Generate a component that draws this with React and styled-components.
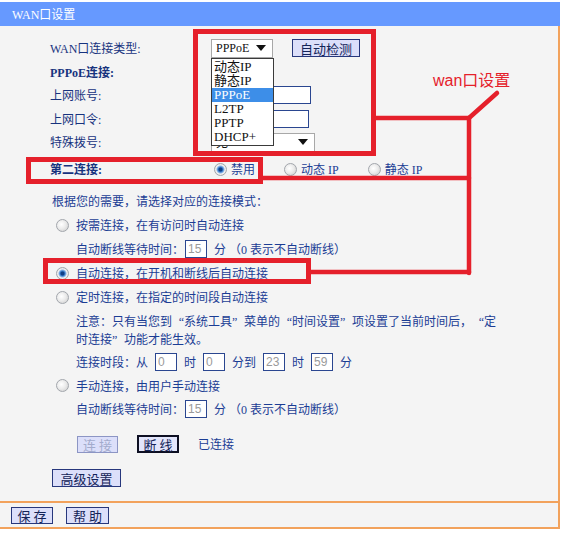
import React from "react";
import styled, { createGlobalStyle, css } from "styled-components";

const navy = "#1b3d94";
const orange = "#f2a25c";
const red = "#e5202b";

const GlobalStyle = createGlobalStyle`
  html, body { margin: 0; padding: 0; background: #fff; }
  body {
    font-family: "Liberation Serif", "Noto Sans CJK SC", serif;
    font-size: 12px;
    color: ${navy};
  }
`;

const Page = styled.div`
  position: relative;
  width: 560px;
  padding-top: 2px;
`;

const TitleBar = styled.div`
  height: 24px;
  background: #6699ff;
  color: #fff;
  padding-left: 12px;
  display: flex;
  align-items: center;
  font-size: 12px;
`;

const Panel = styled.div`
  box-sizing: border-box;
  height: 475px;
  padding: 10px 0 0 50px;
  background: #f4f4f4;
  border-right: 2px solid ${orange};
`;

const Footer = styled.div`
  display: flex;
  align-items: center;
  gap: 13px;
  height: 24px;
  padding-left: 11px;
  background: #f4f4f4;
  border: 2px solid ${orange};
  border-left: none;
`;

const Row = styled.div`
  display: flex;
  align-items: center;
  height: ${p => p.$h || 24}px;
  margin-top: ${p => p.$mt || 0}px;
  padding-left: ${p => p.$indent || 0}px;
  white-space: nowrap;
`;

const Label = styled.div`
  width: 161px;
  flex-shrink: 0;
  font-weight: ${p => (p.$bold ? 700 : 400)};
  color: #17337e;
`;

const Text = styled.span`
  margin-left: ${p => p.$ml || 0}px;
`;

const Notice = styled.div`
  padding: 4px 0 0 26px;
  line-height: 18px;
  height: 37px;
`;

// full-width curly quotes, as the router page's font draws them
const Quote = styled.span`
  display: inline-block;
  width: 12px;
  text-align: ${p => (p.$close ? "left" : "right")};
`;

const Field = styled.input`
  box-sizing: border-box;
  width: ${p => p.$w || 22}px;
  height: ${p => p.$h || 18}px;
  margin: 0 ${p => p.$mr ?? 7}px 0 ${p => p.$ml ?? 7}px;
  padding: 0 2px;
  border: 1px solid #2a4690;
  background: #fff;
  color: #9a9a9a;
  font: 12px "Liberation Sans", sans-serif;
  outline: none;
`;

const Select = styled.div`
  position: relative;
  box-sizing: border-box;
  width: ${p => p.$w}px;
  height: 19px;
  display: flex;
  align-items: center;
  justify-content: space-between;
  padding: 0 6px 0 4px;
  background: #fff;
  border: 1px solid #a8a8a8;
  font-size: 12px;
  color: #111;
`;

const Arrow = styled.span`
  width: 0;
  height: 0;
  border-left: 5px solid transparent;
  border-right: 5px solid transparent;
  border-top: 6px solid #111;
`;

const DropList = styled.ul`
  position: absolute;
  top: 18px;
  left: -1px;
  z-index: 3;
  box-sizing: border-box;
  width: 63px;
  margin: 0;
  padding: 1px 0 1px;
  list-style: none;
  background: #fff;
  border: 1px solid #3a3a3a;
`;

const DropItem = styled.li`
  height: 14px;
  line-height: 14px;
  padding-left: 2px;
  font-size: 13px;
  color: ${p => (p.$active ? "#fff" : "#111")};
  background: ${p => (p.$active ? "#3d8ee8" : "transparent")};
`;

const Btn = styled.button`
  box-sizing: border-box;
  width: ${p => p.$w}px;
  height: ${p => p.$h || 18}px;
  margin-left: ${p => p.$ml || 0}px;
  padding: 0;
  background: #dcdffa;
  border: 1px solid #27377c;
  color: #142458;
  font: 13px "Noto Sans CJK SC", sans-serif;
  line-height: 1;
  ${p =>
    p.$strong &&
    css`
      border: 2px solid #0d0f22;
      background: #e2e5fb;
    `}
  ${p =>
    p.disabled &&
    css`
      color: #a3abcc;
      border-color: #8c95c4;
    `}
`;

const Choice = styled.span`
  display: inline-flex;
  align-items: center;
  gap: ${p => p.$gap || 4}px;
  margin-left: ${p => p.$ml || 0}px;
`;

const Radio = styled.span`
  box-sizing: border-box;
  width: 13px;
  height: 13px;
  border-radius: 50%;
  border: 1px solid #a2a6ac;
  background: radial-gradient(circle at 40% 40%, #ffffff 0, #ececec 45%, #c9c9c9 100%);
  ${p =>
    p.$on &&
    css`
      background: radial-gradient(circle at 50% 50%, #0f3f86 0 1.5px, #3b7fd0 2.5px, #8db6e6 3.5px, #f2f2f2 4.5px, #cfcfcf 100%);
    `}
`;

const Overlay = styled.svg`
  position: absolute;
  top: 0;
  left: 0;
  z-index: 5;
  pointer-events: none;
`;

const Note = styled.span`
  position: absolute;
  top: 71px;
  left: 433px;
  z-index: 5;
  font: 16px "Liberation Sans", "Noto Sans CJK SC", sans-serif;
  line-height: 20px;
  color: ${red};
`;

const types = ["动态IP", "静态IP", "PPPoE", "L2TP", "PPTP", "DHCP+"];

const Annotations = () => (
  <>
    <Overlay width="562" height="533" viewBox="0 0 562 533">
      <g fill="none" stroke={red} strokeWidth="5">
        <rect x="195.5" y="31.5" width="178" height="122" />
        <rect x="28.5" y="159.5" width="232" height="22" />
        <rect x="45.5" y="260.5" width="263" height="21" />
      </g>
      <g stroke={red} strokeWidth="4.5" strokeLinecap="round">
        <line x1="376" y1="118" x2="469" y2="118" />
        <line x1="469" y1="118" x2="469" y2="273" />
        <line x1="263" y1="178" x2="469" y2="178" />
        <line x1="311" y1="272" x2="469" y2="272" />
        <line x1="469" y1="118" x2="497" y2="93" />
      </g>
    </Overlay>
    <Note>wan口设置</Note>
  </>
);

const WaitRow = () => (
  <Row $indent={26}>
    <Text>自动断线等待时间：</Text>
    <Field defaultValue="15" $ml={1} />
    <Text>分</Text>
    <Text $ml={3}>（0 表示不自动断线）</Text>
  </Row>
);

const App = () => (
  <Page>
    <GlobalStyle />
    <TitleBar>WAN口设置</TitleBar>
    <Panel>
      <Row>
        <Label>WAN口连接类型:</Label>
        <Select $w={62}>
          PPPoE
          <Arrow />
          <DropList>
            {types.map(t => (
              <DropItem key={t} $active={t === "PPPoE"}>
                {t}
              </DropItem>
            ))}
          </DropList>
        </Select>
        <Btn $w={68} $ml={19}>
          自动检测
        </Btn>
      </Row>
      <Row $h={23}>
        <Label $bold>PPPoE连接:</Label>
      </Row>
      <Row>
        <Label>上网账号:</Label>
        <Field $w={100} $ml={0} />
      </Row>
      <Row $h={23}>
        <Label>上网口令:</Label>
        <Field $w={98} $ml={0} type="password" />
      </Row>
      <Row>
        <Label>特殊拨号:</Label>
        <Select $w={104}>
          无
          <Arrow />
        </Select>
      </Row>
      <Row $h={30}>
        <Label $bold>第二连接:</Label>
        <Choice $ml={3}>
          <Radio $on />
          禁用
        </Choice>
        <Choice $ml={29}>
          <Radio />
          动态 IP
        </Choice>
        <Choice $ml={29}>
          <Radio />
          静态 IP
        </Choice>
      </Row>

      <Row $mt={5} $indent={2}>
        根据您的需要，请选择对应的连接模式：
      </Row>
      <Row $indent={6}>
        <Choice $gap={7}>
          <Radio />
          按需连接，在有访问时自动连接
        </Choice>
      </Row>
      <WaitRow />
      <Row $indent={6}>
        <Choice $gap={7}>
          <Radio $on />
          自动连接，在开机和断线后自动连接
        </Choice>
      </Row>
      <Row $indent={6}>
        <Choice $gap={7}>
          <Radio />
          定时连接，在指定的时间段自动连接
        </Choice>
      </Row>
      <Notice>
        注意：只有当您到<Quote>“</Quote>系统工具<Quote $close>”</Quote>菜单的<Quote>“</Quote>时间设置
        <Quote $close>”</Quote>项设置了当前时间后，<Quote>“</Quote>定
        <br />
        时连接<Quote $close>”</Quote>功能才能生效。
      </Notice>
      <Row $indent={26}>
        <Text>连接时段：从</Text>
        <Field defaultValue="0" />
        <Text>时</Text>
        <Field defaultValue="0" />
        <Text>分到</Text>
        <Field defaultValue="23" />
        <Text>时</Text>
        <Field defaultValue="59" />
        <Text>分</Text>
      </Row>
      <Row $h={23} $indent={6}>
        <Choice $gap={7}>
          <Radio />
          手动连接，由用户手动连接
        </Choice>
      </Row>
      <WaitRow />
      <Row $h={26} $mt={10} $indent={27}>
        <Btn $w={41} $h={17} disabled>
          连 接
        </Btn>
        <Btn $w={42} $ml={19} $strong>
          断 线
        </Btn>
        <Text $ml={19}>已连接</Text>
      </Row>
      <Row $mt={9} $indent={2}>
        <Btn $w={69}>高级设置</Btn>
      </Row>
    </Panel>
    <Footer>
      <Btn $w={42} $h={17}>
        保 存
      </Btn>
      <Btn $w={43} $h={17}>
        帮 助
      </Btn>
    </Footer>
    <Annotations />
  </Page>
);

export default App;
